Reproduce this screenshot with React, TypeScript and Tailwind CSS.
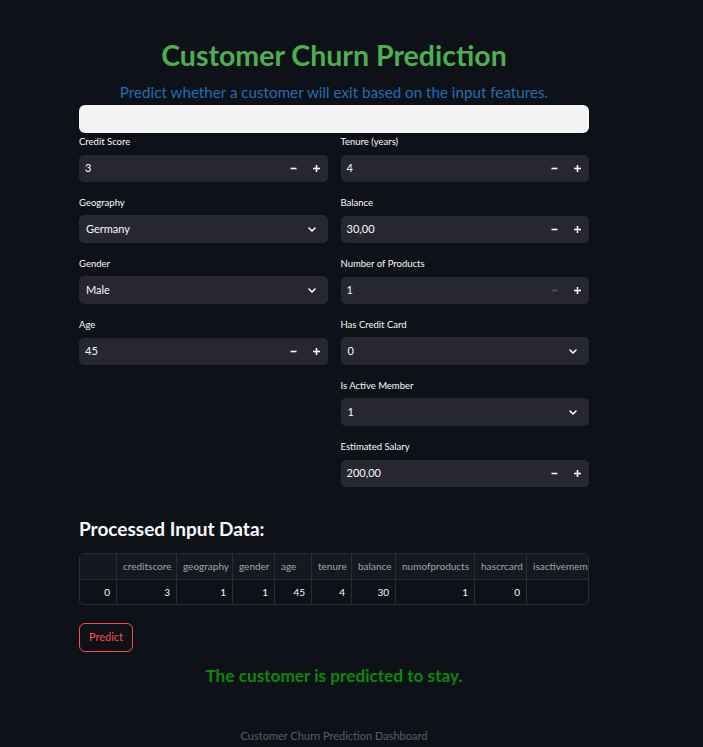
import React from "react";

const FONT = "font-['Lato','Liberation_Sans',sans-serif]";

function Minus({ disabled }: { disabled?: boolean }) {
  return (
    <svg width="7" height="7" viewBox="0 0 7 7">
      <line x1="0.5" y1="3.5" x2="6.5" y2="3.5" stroke={disabled ? "#55575f" : "#fafafa"} strokeWidth="1.6" />
    </svg>
  );
}
function Plus() {
  return (
    <svg width="7" height="7" viewBox="0 0 7 7">
      <line x1="0" y1="3.5" x2="7" y2="3.5" stroke="#fafafa" strokeWidth="1.6" />
      <line x1="3.5" y1="0" x2="3.5" y2="7" stroke="#fafafa" strokeWidth="1.6" />
    </svg>
  );
}
function Chevron() {
  return (
    <svg width="8" height="5" viewBox="0 0 8 5">
      <polyline points="1,1 4,4 7,1" fill="none" stroke="#fafafa" strokeWidth="1.6" strokeLinecap="round" strokeLinejoin="round" />
    </svg>
  );
}

function Label({ text }: { text: string }) {
  return <div className="h-[14px] text-[9.5px] leading-[14px] text-[#fafafa] whitespace-nowrap">{text}</div>;
}

function NumberField({ label, value, minusDisabled }: { label: string; value: string; minusDisabled?: boolean }) {
  return (
    <div className="flex flex-col">
      <Label text={label} />
      <div className="mt-[6px] h-[27px] rounded-[5px] bg-[#262730] flex items-center">
        <div className="flex-1 pl-[6px] text-[11px] text-[#fafafa]">{value}</div>
        <div className="w-[23px] h-full flex items-center justify-center">
          <Minus disabled={minusDisabled} />
        </div>
        <div className="w-[23px] h-full flex items-center justify-center">
          <Plus />
        </div>
      </div>
    </div>
  );
}

function SelectField({ label, value }: { label: string; value: string }) {
  return (
    <div className="flex flex-col">
      <Label text={label} />
      <div className="mt-[5px] h-[28px] rounded-[5px] bg-[#262730] flex items-center pl-[7px] pr-[12px]">
        <div className="flex-1 text-[11px] text-[#fafafa]">{value}</div>
        <Chevron />
      </div>
    </div>
  );
}

const cols = [
  { h: "", v: "0", w: 37 },
  { h: "creditscore", v: "3", w: 60 },
  { h: "geography", v: "1", w: 56 },
  { h: "gender", v: "1", w: 42 },
  { h: "age", v: "45", w: 37 },
  { h: "tenure", v: "4", w: 40 },
  { h: "balance", v: "30", w: 44 },
  { h: "numofproducts", v: "1", w: 79 },
  { h: "hascrcard", v: "0", w: 52 },
  { h: "isactivemember", v: "", w: 80 },
];

export default function App() {
  return (
    <div className={`min-h-screen bg-[#0e1117] ${FONT}`}>
      <div className="w-[510px] ml-[79px] pt-[37px] flex flex-col">
        <h1 className="h-[36px] text-[28.5px] leading-[36px] font-bold text-[#4caf50] text-center whitespace-nowrap">
          Customer Churn Prediction
        </h1>
        <p className="mt-[9px] h-[20px] text-[15.2px] leading-[20px] text-[#1f6fb5] text-center whitespace-nowrap">
          Predict whether a customer will exit based on the input features.
        </p>
        <div className="mt-[3px] h-[28px] rounded-[6px] bg-[#f4f4f4]" />

        <div className="mt-[2px] grid grid-cols-2 gap-x-[13px]">
          <div className="flex flex-col gap-[14px]">
            <NumberField label="Credit Score" value="3" />
            <SelectField label="Geography" value="Germany" />
            <SelectField label="Gender" value="Male" />
            <NumberField label="Age" value="45" />
          </div>
          <div className="flex flex-col gap-[14px]">
            <NumberField label="Tenure (years)" value="4" />
            <NumberField label="Balance" value="30,00" />
            <NumberField label="Number of Products" value="1" minusDisabled />
            <SelectField label="Has Credit Card" value="0" />
            <SelectField label="Is Active Member" value="1" />
            <NumberField label="Estimated Salary" value="200,00" />
          </div>
        </div>

        <h3 className="mt-[29px] h-[26px] text-[19px] leading-[26px] font-bold text-[#fafafa]">
          Processed Input Data:
        </h3>

        <div className="mt-[11px] border border-[#2a2c34] rounded-[5px] overflow-hidden">
          <div className="flex h-[26px] bg-[#15181f] border-b border-[#2a2c34]">
            {cols.map((c, i) => (
              <div
                key={i}
                style={{ width: c.w }}
                className="shrink-0 border-r border-[#2a2c34] flex items-center pl-[6px] text-[10px] text-[#a2a4ab] whitespace-nowrap overflow-hidden"
              >
                {c.h}
              </div>
            ))}
          </div>
          <div className="flex h-[24px]">
            {cols.map((c, i) => (
              <div
                key={i}
                style={{ width: c.w }}
                className="shrink-0 border-r border-[#2a2c34] flex items-center justify-end pr-[6px] text-[10px] text-[#fafafa] whitespace-nowrap"
              >
                {c.v}
              </div>
            ))}
          </div>
        </div>

        <div className="mt-[18px]">
          <button className="h-[29px] w-[54px] rounded-[6px] border border-[#ff4b4b] text-[#ff4b4b] text-[11px] flex items-center justify-center">
            Predict
          </button>
        </div>

        <div className="mt-[13px] h-[22px] text-[17.2px] leading-[22px] font-bold text-[#0a8a0a] text-center whitespace-nowrap">
          The customer is predicted to stay.
        </div>

        <div className="mt-[41px] h-[16px] text-[11px] leading-[16px] text-[#5b5e66] text-center whitespace-nowrap">
          Customer Churn Prediction Dashboard
        </div>
      </div>
    </div>
  );
}
